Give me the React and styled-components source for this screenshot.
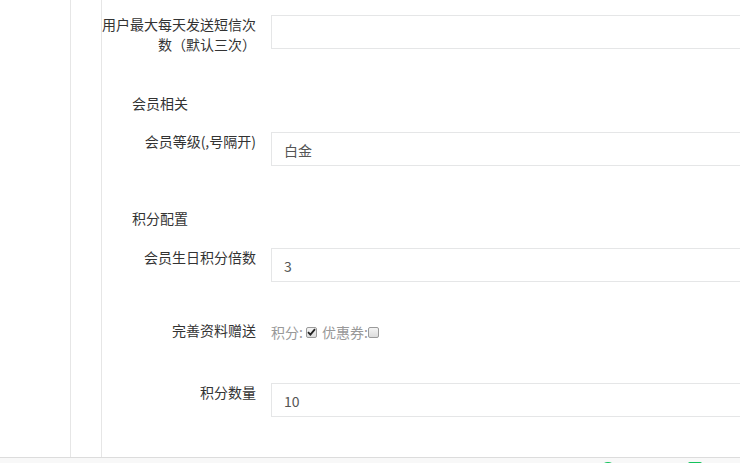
import React from "react";
import styled, { createGlobalStyle } from "styled-components";

const Global = createGlobalStyle`
  html, body { margin: 0; padding: 0; background: #fff; overflow: hidden; }
  body {
    font-family: "Noto Sans CJK SC", "Noto Sans", "Liberation Sans", sans-serif;
    font-size: 14px;
    color: #333;
  }
`;

const Page = styled.div`
  display: flex;
  flex-direction: column;
  width: 740px;
  height: 463px;
  overflow: hidden;
`;

const Body = styled.div`
  display: flex;
  height: 457px;
  flex: none;
`;

const Sidebar = styled.div`
  width: 70px;
  flex: none;
  border-right: 1px solid #e6e6e6;
`;

const Rail = styled.div`
  width: 30px;
  flex: none;
  border-right: 1px solid #e6e6e6;
`;

const Main = styled.div`
  flex: 1;
  overflow: hidden;
  display: flex;
  flex-direction: column;
`;

const Row = styled.div`
  display: flex;
  align-items: flex-start;
  margin-top: ${(p) => p.$mt}px;
  flex: none;
`;

const Label = styled.label`
  width: 154px;
  flex: none;
  text-align: right;
  line-height: 20px;
  margin-top: -1px;
  color: #333;
`;

const Field = styled.div`
  margin-left: 15px;
  flex: 1;
  min-width: 0;
`;

const Input = styled.input`
  box-sizing: border-box;
  display: block;
  width: 520px;
  height: 34px;
  padding: 7px 12px 5px;
  border: 1px solid #e5e6e7;
  border-radius: 0;
  font-family: inherit;
  font-size: 14px;
  line-height: 20px;
  color: #555;
  background: #fff;
  outline: none;
`;

const Section = styled.div`
  margin-top: ${(p) => p.$mt}px;
  padding-left: 30px;
  line-height: 20px;
  color: #333;
  flex: none;
`;

const Checks = styled.div`
  display: flex;
  align-items: center;
  padding-top: 1px;
  line-height: 20px;
  color: #999;
`;

const CheckText = styled.span`
  margin-right: ${(p) => p.$mr}px;
`;

const Box = styled.span`
  box-sizing: border-box;
  width: 11px;
  height: 11px;
  border: 1px solid #9a9a9a;
  border-radius: 2px;
  background: linear-gradient(#f4f4f4, #dcdcdc);
  display: inline-flex;
  align-items: center;
  justify-content: center;
  margin-right: ${(p) => p.$mr}px;
`;

const Footer = styled.div`
  flex: none;
  height: 40px;
  border-top: 1px solid #dcdcdc;
  background: #f8f8f8;
  display: flex;
  justify-content: flex-end;
  align-items: flex-start;
  gap: 72px;
  padding: 4px 38px 0 0;
`;

const Dot = styled.span`
  width: 16px;
  height: 16px;
  border-radius: 50%;
  background: #13c25b;
`;

const Square = styled.span`
  width: 14px;
  height: 14px;
  border-radius: 2px;
  background: #13c25b;
`;

const Check = () => (
  <svg width="9" height="8" viewBox="0 0 9 8">
    <path d="M1 4.2 L3.4 6.6 L8 1.2" fill="none" stroke="#222" strokeWidth="1.8" />
  </svg>
);

export default function App() {
  return (
    <>
      <Global />
      <Page>
        <Body>
          <Sidebar />
          <Rail />
          <Main>
            <Row $mt={15}>
              <Label>用户最大每天发送短信次数（默认三次）</Label>
              <Field>
                <Input defaultValue="" />
              </Field>
            </Row>
            <Section $mt={39}>会员相关</Section>
            <Row $mt={19}>
              <Label>会员等级(,号隔开)</Label>
              <Field>
                <Input defaultValue="白金" />
              </Field>
            </Row>
            <Section $mt={42}>积分配置</Section>
            <Row $mt={20}>
              <Label>会员生日积分倍数</Label>
              <Field>
                <Input defaultValue="3" />
              </Field>
            </Row>
            <Row $mt={39}>
              <Label>完善资料赠送</Label>
              <Field>
                <Checks>
                  <CheckText $mr={3}>积分:</CheckText>
                  <Box $mr={5}>
                    <Check />
                  </Box>
                  <CheckText $mr={0}>优惠券:</CheckText>
                  <Box $mr={0} />
                </Checks>
              </Field>
            </Row>
            <Row $mt={41}>
              <Label>积分数量</Label>
              <Field>
                <Input defaultValue="10" />
              </Field>
            </Row>
          </Main>
        </Body>
        <Footer>
          <Dot />
          <Square />
        </Footer>
      </Page>
    </>
  );
}
